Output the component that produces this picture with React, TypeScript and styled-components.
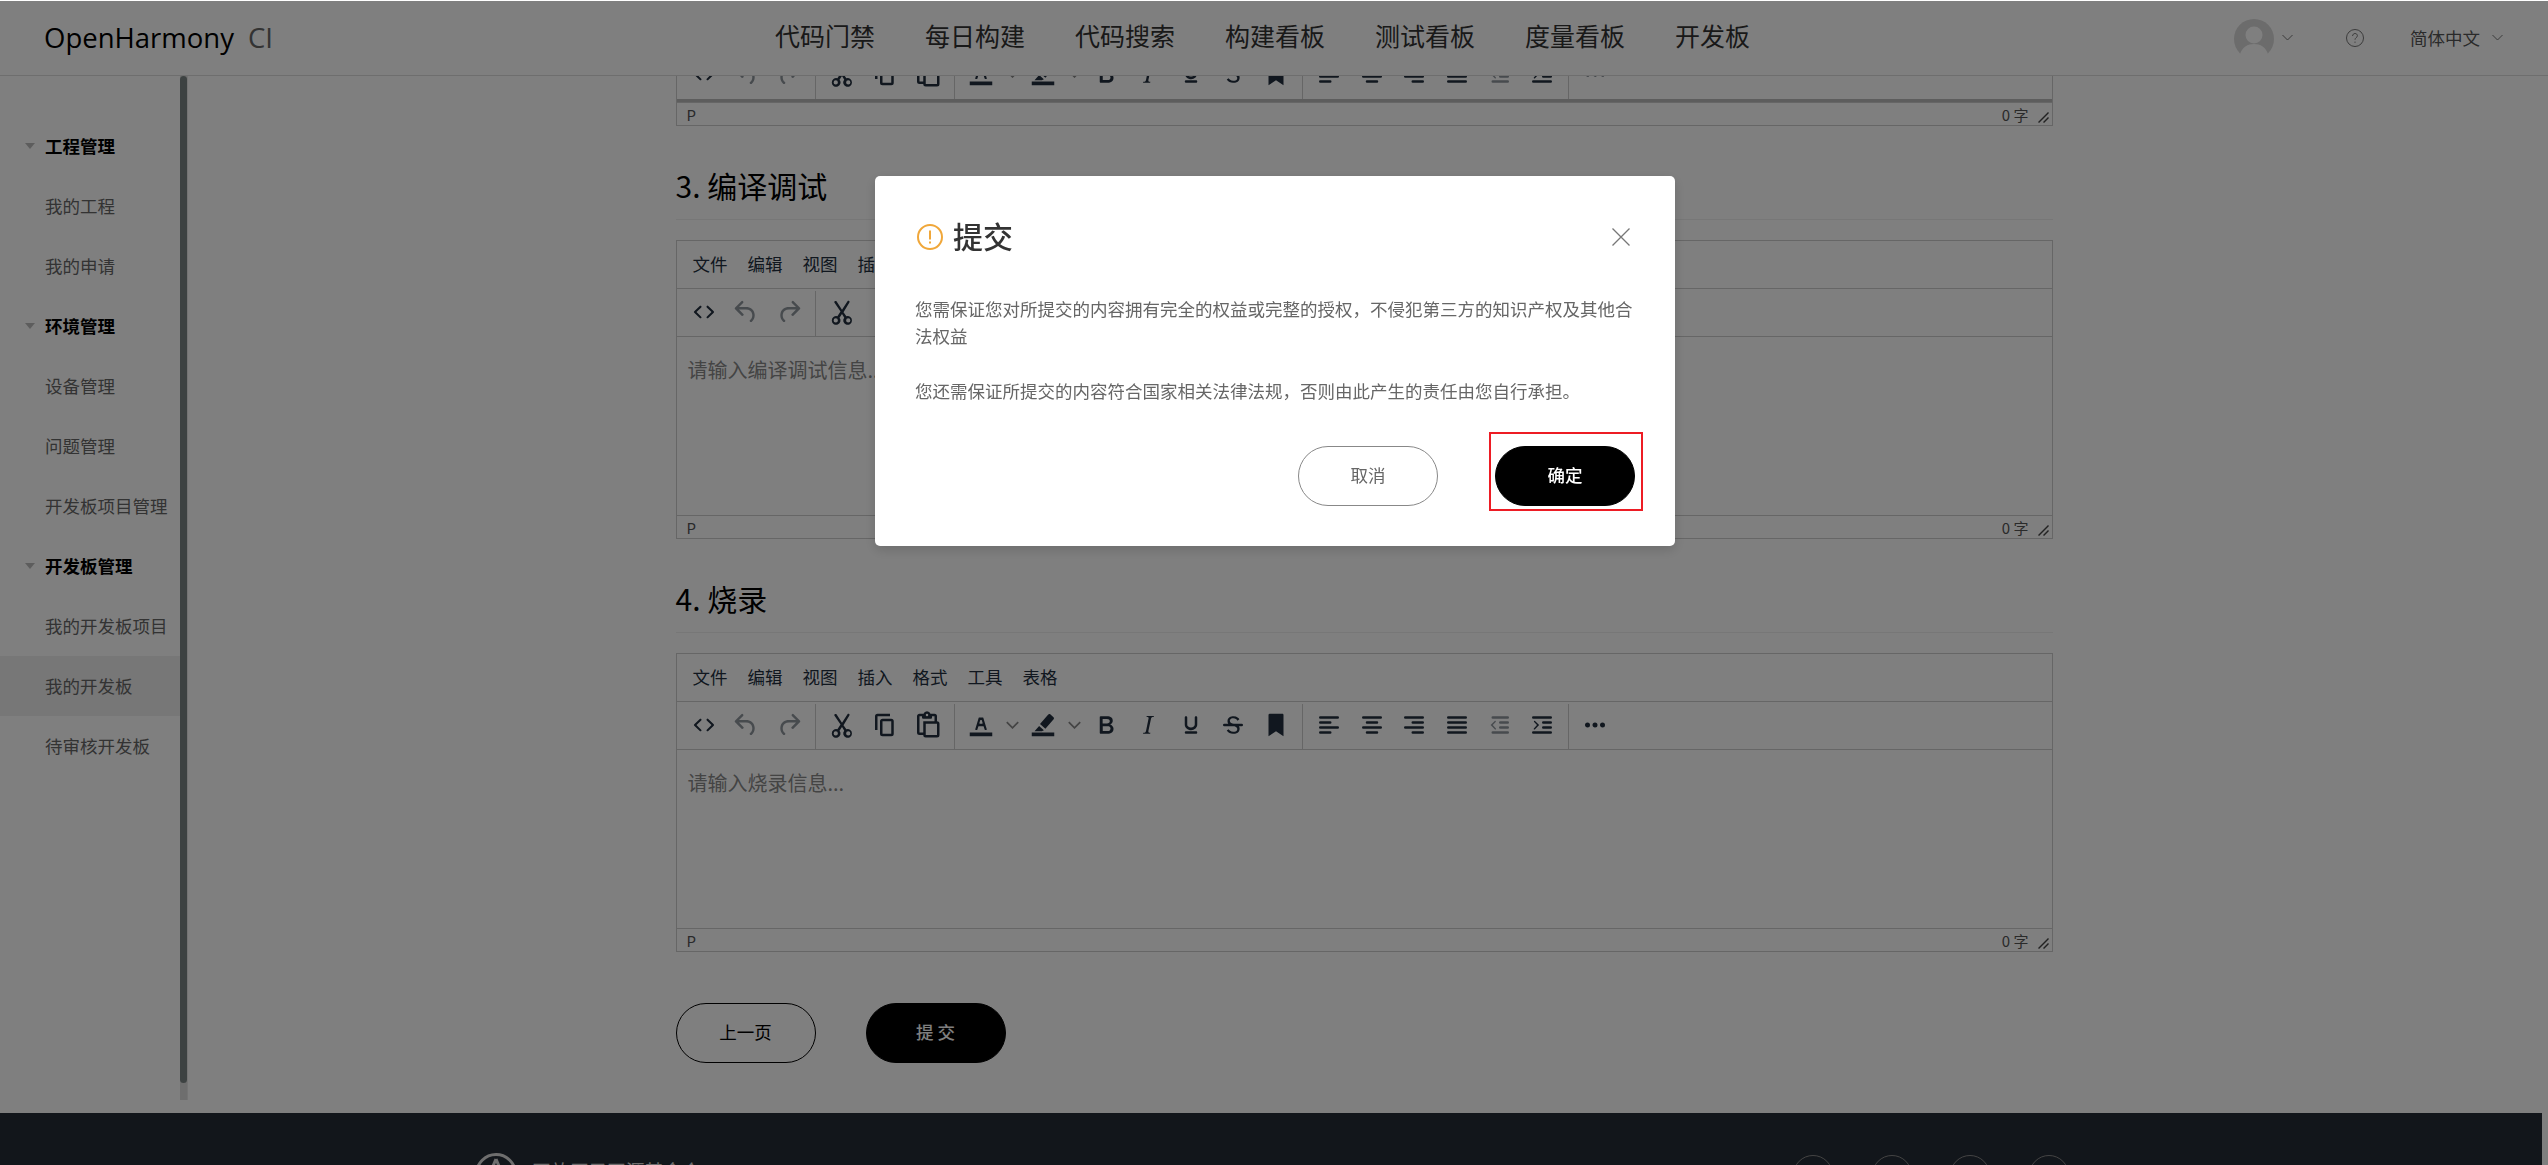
import React from 'react';
import styled, { createGlobalStyle } from 'styled-components';

const FONT = '"Noto Sans CJK SC", "Liberation Sans", sans-serif';

const GlobalStyle = createGlobalStyle`
  html, body {
    margin: 0;
    padding: 0;
    height: 100%;
    overflow: hidden;
    background: #fff;
    font-family: ${FONT};
  }
  * {
    box-sizing: border-box;
  }
`;

const Page = styled.div`
  height: 100vh;
  overflow: hidden;
  display: flex;
  flex-direction: column;
`;

const Header = styled.header`
  position: relative;
  z-index: 5;
  flex: none;
  height: 76px;
  background: #fff;
  border-bottom: 1px solid #ddd;
  display: flex;
  align-items: center;
  padding: 0 44px;
`;

const Logo = styled.div`
  width: 731px;
  flex: none;
  font-size: 27.5px;
  color: #000;
  font-family: "Open Sans", sans-serif;
  line-height: 76px;
`;

const LogoSub = styled.span`
  color: #666;
  margin-left: 14px;
`;

const TopNav = styled.nav`
  display: flex;
  gap: 50px;
  flex: 1;
  margin-top: -6px;
`;

const TopNavItem = styled.a`
  font-size: 25px;
  line-height: 66px;
  color: #333;
`;

const HeaderRight = styled.div`
  display: flex;
  align-items: center;
  margin-right: 1px;
`;

const Avatar = styled.div`
  width: 40px;
  height: 36px;
  margin: -2px 8px 0 0;
  overflow: hidden;
  color: #d8d8d8;
`;

const ChevronIcon = styled.svg<{ $mr?: number }>`
  display: block;
  flex: none;
  width: 11px;
  height: 7px;
  margin-right: ${(p) => p.$mr ?? 0}px;
  fill: none;
  stroke: #777;
  stroke-width: 1;
`;

const ToolChevronIcon = styled(ChevronIcon)`
  width: 13px;
  height: 8px;
  stroke: #888;
  stroke-width: 1.5;
`;

const HelpIcon = styled.svg`
  flex: none;
  display: block;
  width: 18px;
  height: 18px;
  margin-right: 46px;
  fill: none;
  stroke: #777;
`;

const LangText = styled.span`
  font-size: 17.5px;
  color: #555;
  margin-right: 12px;
`;

const Layout = styled.div`
  display: flex;
  flex: none;
  height: 1037px;
  overflow: hidden;
`;

const Sidebar = styled.aside`
  flex: none;
  width: 188px;
  display: flex;
`;

const SideList = styled.div`
  width: 180px;
  padding-top: 40px;
`;

const SideItem = styled.div<{ $group?: boolean; $active?: boolean }>`
  position: relative;
  height: 60px;
  line-height: 60px;
  padding-left: 45px;
  font-size: 17.5px;
  white-space: nowrap;
  font-weight: ${(p) => (p.$group ? 700 : 400)};
  color: ${(p) => (p.$group ? '#000' : '#666')};
  background: ${(p) => (p.$active ? '#eee' : 'transparent')};
`;

const Caret = styled.span`
  position: absolute;
  left: 25px;
  top: 27px;
  border-left: 5px solid transparent;
  border-right: 5px solid transparent;
  border-top: 6px solid #bbb;
`;

const Track = styled.div`
  width: 8px;
  height: 1024px;
  background: #ddd;
  border-right: 1px solid #e8e8e8;
`;

const Thumb = styled.div`
  width: 7px;
  height: 1007px;
  background: #7b8584;
  border-radius: 4px;
`;

const Main = styled.main`
  flex: 1;
  min-width: 0;
  display: flex;
  justify-content: center;
  padding-right: 8px;
`;

const Content = styled.div`
  width: 1377px;
  flex: none;
  margin-top: -27px;
`;

const SectionTitle = styled.h2`
  margin: 0 0 20px;
  padding-top: 46px;
  height: 94px;
  font-size: 30px;
  line-height: 26px;
  font-weight: 400;
  color: #000;
  border-bottom: 1px solid #eee;
`;

const Editor = styled.div`
  border: 1px solid #ccc;
  background: #fff;
  color: #222f3e;
`;

const MenuBar = styled.div`
  display: flex;
  height: 47px;
  padding-left: 16px;
  gap: 20px;
  font-size: 17.5px;
  line-height: 46px;
`;

const Toolbar = styled.div`
  display: flex;
  height: 49px;
  padding-left: 1px;
  border-top: 1px solid #ccc;
  border-bottom: 1px solid #ccc;
`;

const TopToolbar = styled(Toolbar)`
  border-top: none;
  height: 50px;
`;

const ToolGroup = styled.div<{ $last?: boolean }>`
  display: flex;
  align-items: center;
  padding: 0 5px;
  margin-top: 2px;
  border-right: ${(p) => (p.$last ? 'none' : '1px solid #ccc')};
`;

const ToolButton = styled.div<{ $disabled?: boolean }>`
  width: 42.5px;
  height: 42.5px;
  display: flex;
  align-items: center;
  justify-content: center;
  margin-top: -3px;
  opacity: ${(p) => (p.$disabled ? 0.5 : 1)};
`;

const ToolChevron = styled.div`
  width: 20px;
  height: 42.5px;
  margin-top: -3px;
  display: flex;
  align-items: center;
  justify-content: center;
`;

const Icon = styled.svg`
  display: block;
  width: 30px;
  height: 30px;
  fill: #222f3e;
`;

const EditArea = styled.div<{ $height: number }>`
  height: ${(p) => p.$height}px;
  padding: 20px 11px 0;
  font-size: 20px;
  line-height: 26px;
  color: #888;
  overflow: hidden;
`;

const ThickLine = styled.div`
  height: 3px;
  margin-top: -1px;
  background: #bbb;
`;

const StatusBar = styled.div`
  display: flex;
  align-items: center;
  height: 23px;
  padding: 0 2px 0 10px;
  font-size: 15px;
  color: #555;
  border-top: 1px solid #ccc;
`;

const StatusPath = styled.span`
  flex: 1;
`;

const ResizeIcon = styled.svg`
  display: block;
  width: 12px;
  height: 12px;
  margin-left: 9px;
  margin-top: 8px;
  fill: #444;
`;

const Actions = styled.div`
  display: flex;
  gap: 50px;
  margin-top: 51px;
`;

const PillButton = styled.button<{ $primary?: boolean; $thin?: boolean }>`
  width: 140px;
  height: 60px;
  padding: 0 0 3px;
  border-radius: 30px;
  border: 1px solid ${(p) => (p.$primary ? '#000' : p.$thin ? '#888' : '#000')};
  background: ${(p) => (p.$primary ? '#000' : '#fff')};
  color: ${(p) => (p.$primary ? '#fff' : p.$thin ? '#666' : '#000')};
  font-family: ${FONT};
  font-size: 17.5px;
  font-weight: ${(p) => (p.$primary ? 500 : 400)};
`;

const Footer = styled.footer`
  flex: none;
  height: 300px;
  margin-right: 6px;
  background: #252c36;
  position: relative;
  display: flex;
  padding: 40px 0 0 475px;
`;

const FooterLogo = styled.svg`
  display: block;
  flex: none;
  width: 42px;
  height: 42px;
  margin-right: 15px;
  fill: none;
  stroke: #ddd;
`;

const FooterName = styled.div`
  font-size: 18.75px;
  line-height: 26px;
  margin-top: 5px;
  color: #ddd;
  width: 1261px;
  flex: none;
`;

const FooterCircles = styled.div`
  display: flex;
  gap: 38.5px;
  margin-top: 2px;
`;

const FooterCircle = styled.div`
  width: 40px;
  height: 40px;
  border-radius: 50%;
  border: 1px solid #888;
`;

const Mask = styled.div`
  position: fixed;
  inset: 1px 0 0 0;
  z-index: 10;
  background: rgba(0, 0, 0, 0.5);
  display: flex;
  justify-content: center;
  align-items: flex-start;
  padding: 175px 0 0 2px;
`;

const Dialog = styled.div`
  width: 800px;
  height: 370px;
  background: #fff;
  border-radius: 5px;
  padding: 40px;
  box-shadow: 0 4px 12px rgba(0, 0, 0, 0.15);
`;

const DialogHead = styled.div`
  display: flex;
  align-items: center;
  height: 42px;
`;

const WarnIcon = styled.svg`
  display: block;
  flex: none;
  width: 26px;
  height: 26px;
  margin: 0 10px 0 2px;
  fill: none;
`;

const DialogTitle = styled.div`
  flex: 1;
  font-size: 30px;
  line-height: 40px;
  margin-top: -4px;
  color: #333;
  font-weight: 500;
`;

const CloseIcon = styled.svg`
  display: block;
  width: 18px;
  height: 18px;
  margin-right: 5px;
  stroke: #777;
  fill: none;
`;

const DialogBody = styled.div`
  margin-top: 37px;
  font-size: 17.5px;
  line-height: 27.3px;
  color: #666;
`;

const DialogActions = styled.div`
  display: flex;
  justify-content: flex-end;
  gap: 57px;
  margin-top: 42px;
`;

const Highlighted = styled.div`
  position: relative;
`;

const RedBox = styled.div`
  position: absolute;
  left: -6px;
  right: -8px;
  top: -14px;
  bottom: -5px;
  border: 2px solid #ed1c24;
`;

const hLines = (rows: Array<[number, number]>) =>
  rows.map(([x, w], i) => `M${x} ${5 + i * 4}h${w}a1 1 0 0 1 0 2h-${w}a1 1 0 0 1 0-2z`).join('');

const ICONS: Record<string, string> = {
  code: 'M9.8 15.7c.3.3.3.8 0 1-.3.4-.9.4-1.2 0l-4.4-4.1a.8.8 0 0 1 0-1.2l4.4-4.2c.3-.3.9-.3 1.2 0 .3.3.3.8 0 1.1L6 12l3.8 3.7zM14.2 15.7c-.3.3-.3.8 0 1 .3.4.9.4 1.2 0l4.4-4.1c.3-.3.3-.9 0-1.2l-4.4-4.2a.8.8 0 0 0-1.2 0c-.3.3-.3.8 0 1.1L18 12l-3.8 3.7z',
  undo: 'M6.4 8H12c3.7 0 6.2 2 6.8 5.1.6 2.7-.4 5.6-2.3 6.8a1 1 0 0 1-1-1.8c1.1-.6 1.8-2.7 1.4-4.6-.5-2.1-2.1-3.5-4.9-3.5H6.4l3.3 3.3a1 1 0 1 1-1.4 1.4l-5-5a1 1 0 0 1 0-1.4l5-5a1 1 0 0 1 1.4 1.4L6.4 8z',
  redo: 'M17.6 8H12c-3.7 0-6.2 2-6.8 5.1-.6 2.7.4 5.6 2.3 6.8a1 1 0 0 0 1-1.8c-1.1-.6-1.8-2.7-1.4-4.6.5-2.1 2.1-3.5 4.9-3.5h5.6l-3.3 3.3a1 1 0 1 0 1.4 1.4l5-5a1 1 0 0 0 0-1.4l-5-5a1 1 0 0 0-1.4 1.4L17.6 8z',
  cut: 'M7.6 3.4 12 10.2l4.4-6.8c.3-.4.9-.5 1.3-.2.4.3.5.8.2 1.2l-4.7 7.7 2.3 3.3a3.5 3.5 0 1 1-1.7 1.1L12 13.6l-2 2.9a3.5 3.5 0 1 1-1.7-1.1l2.5-3.8L6 4.6c-.3-.4-.2-.9.2-1.2.4-.3 1.1-.4 1.4 0zM7 17a1.7 1.7 0 1 0 0 3.4A1.7 1.7 0 0 0 7 17zm10 0a1.7 1.7 0 1 0 0 3.4 1.7 1.7 0 0 0 0-3.4z',
  copy: 'M16 3H6a2 2 0 0 0-2 2v11h2V5h10V3zm1 4a2 2 0 0 1 2 2v10a2 2 0 0 1-2 2h-7a2 2 0 0 1-2-2V9c0-1.2.9-2 2-2h7zm0 12V9h-7v10h7z',
  paste: 'M18 9V5h-2v1c0 .6-.4 1-1 1H9a1 1 0 0 1-1-1V5H6v13h3V9h9zM9 20H6a2 2 0 0 1-2-2V5c0-1.1.9-2 2-2h3.2A3 3 0 0 1 12 1a3 3 0 0 1 2.8 2H18a2 2 0 0 1 2 2v4a2 2 0 0 1 2 2v9a2 2 0 0 1-2 2h-9a2 2 0 0 1-2-2zm2-9v9h9v-9h-9zM12 3a1 1 0 1 0 0 2 1 1 0 0 0 0-2z',
  textColor: 'M3 18h18v3H3zM8.7 16h-.8a.5.5 0 0 1-.5-.6l2.7-9c.1-.3.3-.4.5-.4h2.8c.2 0 .4.1.5.4l2.7 9a.5.5 0 0 1-.5.6h-.8a.5.5 0 0 1-.4-.4l-.7-2.2c0-.3-.3-.4-.5-.4h-3.4c-.2 0-.4.1-.5.4l-.7 2.2c0 .3-.2.4-.4.4zm2.6-7.6-.6 2a.5.5 0 0 0 .5.6h1.6a.5.5 0 0 0 .5-.6l-.6-2c0-.3-.3-.4-.5-.4h-.4c-.2 0-.4.1-.5.4z',
  highlight: 'M3 18h18v3H3zM17.8 3.4l2.6 2.3c.5.5.5 1.2.1 1.7l-6.6 7.6-4.3-3.8 6.6-7.6c.4-.5 1.1-.6 1.6-.2zM8.9 12.8l3.8 3.3-1.6 .9H5.2l3.7-4.2z',
  bold: 'M7.8 19c-.3 0-.5 0-.6-.2l-.2-.5V5.7c0-.2 0-.4.2-.5l.6-.2h5c1.5 0 2.7.3 3.5 1 .7.6 1.1 1.4 1.1 2.5a3 3 0 0 1-.6 1.9c-.4.6-1 1-1.6 1.2.4.1.9.3 1.3.6s.8.7 1 1.2c.4.4.5 1 .5 1.6 0 1.3-.4 2.3-1.3 3-.8.7-2.1 1-3.8 1H7.8zm5-8.3c.6 0 1.2-.1 1.6-.5.4-.3.6-.7.6-1.3 0-1.1-.8-1.7-2.3-1.7H9.3v3.5h3.4zm.5 6c.7 0 1.3-.1 1.7-.4.4-.4.6-.9.6-1.5s-.2-1-.7-1.4c-.4-.3-1-.4-2-.4H9.4v3.8h4z',
  italic: 'M16.7 4.7l-.1.9h-.3c-.6 0-1 0-1.4.3-.3.3-.4.6-.5 1.1l-2.1 9.8v.6c0 .5.4.8 1.4.8h.2l-.2.8H8l.2-.8h.2c1.1 0 1.8-.5 2-1.5l2-9.8.1-.5c0-.6-.4-.8-1.4-.8h-.3l.2-.9h5.8z',
  underline: 'M16 5c.6 0 1 .4 1 1v5.5a4 4 0 0 1-.4 1.8l-1 1.4a5.3 5.3 0 0 1-5.5 1 5 5 0 0 1-1.6-1c-.5-.4-.8-.9-1.1-1.4a4 4 0 0 1-.4-1.8V6c0-.6.4-1 1-1s1 .4 1 1v5.5c0 .3 0 .6.2 1l.6.7a3.3 3.3 0 0 0 2.2.8 3.4 3.4 0 0 0 2.2-.8c.3-.2.4-.5.6-.8l.2-.9V6c0-.6.4-1 1-1zM8 17h8c.6 0 1 .4 1 1s-.4 1-1 1H8a1 1 0 0 1 0-2z',
  strike: 'M15.6 8.5c-.5-.7-1-1.1-1.3-1.3-.6-.4-1.3-.6-2-.6-2.7 0-2.8 1.7-2.8 2.1 0 1.6 1.8 2 3.2 2.3 4.4.9 4.6 2.8 4.6 3.9 0 1.4-.7 4.1-5 4.1A6.2 6.2 0 0 1 7 16.4l1.5-1.1c.4.6 1.6 2 3.7 2 1.6 0 2.5-.4 3-1.2.4-.8.3-2-.8-2.6-.7-.4-1.6-.7-2.9-1-1-.2-3.9-.8-3.9-3.6C7.6 6 10.3 5 12.4 5c2.9 0 4.2 1.6 4.7 2.4l-1.5 1.1zM5 11h14a1 1 0 0 1 0 2H5a1 1 0 0 1 0-2z',
  bookmark: 'M6 4v17l6-4 6 4V4c0-.6-.4-1-1-1H7a1 1 0 0 0-1 1z',
  alignLeft: hLines([[5, 14], [5, 8], [5, 14], [5, 8]]),
  alignCenter: hLines([[5, 14], [8, 8], [5, 14], [8, 8]]),
  alignRight: hLines([[5, 14], [11, 8], [5, 14], [11, 8]]),
  justify: hLines([[5, 14], [5, 14], [5, 14], [5, 14]]),
  outdent: hLines([[7, 12], [13, 6], [13, 6], [7, 12]]) + 'M9.5 9.3 7 12l2.5 2.7c.3.3.1.8-.4.8-.2 0-.3 0-.5-.2L5.3 12l3.3-3.3c.4-.3.9 0 .9.6z',
  indent: hLines([[5, 14], [13, 6], [13, 6], [5, 14]]) + 'M5.5 9.3 8 12l-2.5 2.7c-.3.3-.1.8.4.8.2 0 .3 0 .5-.2L9.7 12 6.4 8.7c-.4-.3-.9 0-.9.6z',
  more: 'M6 10a2 2 0 0 0-2 2c0 1.1.9 2 2 2a2 2 0 0 0 2-2 2 2 0 0 0-2-2zm12 0a2 2 0 0 0-2 2c0 1.1.9 2 2 2a2 2 0 0 0 2-2 2 2 0 0 0-2-2zm-6 0a2 2 0 0 0-2 2c0 1.1.9 2 2 2a2 2 0 0 0 2-2 2 2 0 0 0-2-2z',
};

type Tool = { icon: string; disabled?: boolean; split?: boolean };

const TOOL_GROUPS: Tool[][] = [
  [{ icon: 'code' }, { icon: 'undo', disabled: true }, { icon: 'redo', disabled: true }],
  [{ icon: 'cut' }, { icon: 'copy' }, { icon: 'paste' }],
  [
    { icon: 'textColor', split: true },
    { icon: 'highlight', split: true },
    { icon: 'bold' },
    { icon: 'italic' },
    { icon: 'underline' },
    { icon: 'strike' },
    { icon: 'bookmark' },
  ],
  [
    { icon: 'alignLeft' },
    { icon: 'alignCenter' },
    { icon: 'alignRight' },
    { icon: 'justify' },
    { icon: 'outdent', disabled: true },
    { icon: 'indent' },
  ],
  [{ icon: 'more' }],
];

const Chevron: React.FC<{ mr?: number }> = ({ mr }) => (
  <ChevronIcon $mr={mr} viewBox="0 0 11 7">
    <path d="M.5 1 5.5 6l5-5" />
  </ChevronIcon>
);

const ToolRow: React.FC = () => (
  <>
    {TOOL_GROUPS.map((group, i) => (
      <ToolGroup key={i} $last={i === TOOL_GROUPS.length - 1}>
        {group.map((tool) => (
          <React.Fragment key={tool.icon}>
            <ToolButton $disabled={tool.disabled}>
              <Icon viewBox="0 0 24 24">
                <path d={ICONS[tool.icon]} />
              </Icon>
            </ToolButton>
            {tool.split && (
              <ToolChevron>
                <ToolChevronIcon viewBox="0 0 11 7">
                  <path d="M.5 1 5.5 6l5-5" />
                </ToolChevronIcon>
              </ToolChevron>
            )}
          </React.Fragment>
        ))}
      </ToolGroup>
    ))}
  </>
);

const Status: React.FC = () => (
  <StatusBar>
    <StatusPath>P</StatusPath>
    <span>0 字</span>
    <ResizeIcon viewBox="0 0 12 12">
      <path d="M11 1 1 11l-1-1L10 0zM11 6l-5 5-1-1 5-5z" />
    </ResizeIcon>
  </StatusBar>
);

const MENU_ITEMS = ['文件', '编辑', '视图', '插入', '格式', '工具', '表格'];

const FullEditor: React.FC<{ placeholder: string }> = ({ placeholder }) => (
  <Editor>
    <MenuBar>
      {MENU_ITEMS.map((m) => (
        <span key={m}>{m}</span>
      ))}
    </MenuBar>
    <Toolbar>
      <ToolRow />
    </Toolbar>
    <EditArea $height={178}>{placeholder}</EditArea>
    <Status />
  </Editor>
);

const NAV_ITEMS = ['代码门禁', '每日构建', '代码搜索', '构建看板', '测试看板', '度量看板', '开发板'];

const SIDE_ITEMS: Array<{ label: string; group?: boolean; active?: boolean }> = [
  { label: '工程管理', group: true },
  { label: '我的工程' },
  { label: '我的申请' },
  { label: '环境管理', group: true },
  { label: '设备管理' },
  { label: '问题管理' },
  { label: '开发板项目管理' },
  { label: '开发板管理', group: true },
  { label: '我的开发板项目' },
  { label: '我的开发板', active: true },
  { label: '待审核开发板' },
];

const App: React.FC = () => (
  <Page>
    <GlobalStyle />
    <Header>
      <Logo>
        OpenHarmony<LogoSub>CI</LogoSub>
      </Logo>
      <TopNav>
        {NAV_ITEMS.map((n) => (
          <TopNavItem key={n}>{n}</TopNavItem>
        ))}
      </TopNav>
      <HeaderRight>
        <Avatar>
          <svg width="40" height="40" viewBox="0 0 40 40">
            <circle cx="20" cy="20" r="20" fill="currentColor" />
            <circle cx="20" cy="16" r="8.5" fill="#fff" />
            <path d="M5 40c1-11 8-15 15-15s14 4 15 15z" fill="#fff" />
          </svg>
        </Avatar>
        <Chevron mr={53} />
        <HelpIcon viewBox="0 0 18 18">
          <circle cx="9" cy="9" r="8.5" />
          <path d="M6.6 7c0-1.5 1.1-2.5 2.4-2.5s2.4.9 2.4 2.2c0 1.9-2.4 2-2.4 4" />
          <path d="M9 12.6v1.2" />
        </HelpIcon>
        <LangText>简体中文</LangText>
        <Chevron />
      </HeaderRight>
    </Header>

    <Layout>
      <Sidebar>
        <SideList>
          {SIDE_ITEMS.map((item) => (
            <SideItem key={item.label} $group={item.group} $active={item.active}>
              {item.group && <Caret />}
              {item.label}
            </SideItem>
          ))}
        </SideList>
        <Track>
          <Thumb />
        </Track>
      </Sidebar>

      <Main>
        <Content>
          <Editor>
            <TopToolbar>
              <ToolRow />
            </TopToolbar>
            <ThickLine />
            <Status />
          </Editor>

          <SectionTitle>3. 编译调试</SectionTitle>
          <FullEditor placeholder="请输入编译调试信息..." />

          <SectionTitle>4. 烧录</SectionTitle>
          <FullEditor placeholder="请输入烧录信息..." />

          <Actions>
            <PillButton>上一页</PillButton>
            <PillButton $primary>提 交</PillButton>
          </Actions>
        </Content>
      </Main>
    </Layout>

    <Footer>
      <FooterLogo viewBox="0 0 42 42">
        <circle cx="21" cy="21" r="19.5" strokeWidth="3" />
        <path d="M21 6 10 32M21 6l11 26" strokeWidth="3" />
      </FooterLogo>
      <FooterName>开放原子开源基金会</FooterName>
      <FooterCircles>
        <FooterCircle />
        <FooterCircle />
        <FooterCircle />
        <FooterCircle />
      </FooterCircles>
    </Footer>

    <Mask>
      <Dialog>
        <DialogHead>
          <WarnIcon viewBox="0 0 26 26">
            <circle cx="13" cy="13" r="12" stroke="#f0a73a" strokeWidth="2" />
            <path d="M13 6.5v9" stroke="#f0a73a" strokeWidth="2" />
            <path d="M13 17.5v2" stroke="#f0a73a" strokeWidth="2" />
          </WarnIcon>
          <DialogTitle>提交</DialogTitle>
          <CloseIcon viewBox="0 0 18 18">
            <path d="M.5.5l17 17M17.5.5l-17 17" strokeWidth="1.3" />
          </CloseIcon>
        </DialogHead>
        <DialogBody>
          您需保证您对所提交的内容拥有完全的权益或完整的授权，不侵犯第三方的知识产权及其他合法权益
          <br />
          <br />
          您还需保证所提交的内容符合国家相关法律法规，否则由此产生的责任由您自行承担。
        </DialogBody>
        <DialogActions>
          <PillButton $thin>取消</PillButton>
          <Highlighted>
            <PillButton $primary>确定</PillButton>
            <RedBox />
          </Highlighted>
        </DialogActions>
      </Dialog>
    </Mask>
  </Page>
);

export default App;
